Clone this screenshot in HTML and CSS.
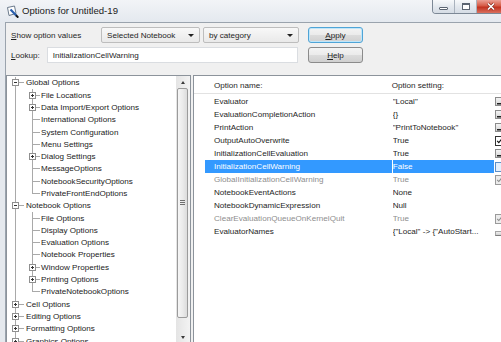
FILE: index.html
```html
<!DOCTYPE html>
<html lang="en">
<head>
<meta charset="utf-8">
<title>Options for Untitled-19</title>
<link rel="stylesheet" href="styles.css">
</head>
<body>
<div class="window">
	<div class="titlebar">
		<svg class="app-icon" viewBox="0 0 13 13">
			<path d="M1.5 2.5 L8.5 1 L10 8.5 L3 10.5Z" fill="#fff" stroke="#6b7a8c"/>
			<path d="M4.5 4.5 L10.5 10.8" stroke="#2a5fae" stroke-width="2.2"/>
			<path d="M10 10.3 L12.3 12.6" stroke="#111" stroke-width="2"/>
		</svg>
		<span class="title">Options for Untitled-19</span>
		<div class="winbtns">
			<span class="wb min"><i></i></span>
			<span class="wb max"><i></i></span>
			<span class="wb close">
				<svg width="10" height="9" viewBox="0 0 10 9">
					<path d="M2 1.5L8 7.5M8 1.5L2 7.5" stroke="#8a2a1e" stroke-width="3"/>
					<path d="M2 1.5L8 7.5M8 1.5L2 7.5" stroke="#fff" stroke-width="1.6"/>
				</svg>
			</span>
		</div>
	</div>

	<div class="client">
		<div class="bar">
			<span class="lbl lbl-show"><u>S</u>how option values</span>
			<div class="combo c1"><span>Selected Notebook</span><b class="arr"></b></div>
			<div class="combo c2"><span>by category</span><b class="arr"></b></div>
			<button class="btn default"><u>A</u>pply</button>
		</div>
		<div class="bar">
			<span class="lbl lbl-look"><u>L</u>ookup:</span>
			<div class="lookup">InitializationCellWarning</div>
			<button class="btn help"><u>H</u>elp</button>
		</div>

		<div class="main">
			<div class="treebox">
				<ul class="tree">
					<li class="l1"><i class="ex minus"></i><span>Global Options</span></li>
					<li class="l2"><i class="ex plus"></i><span>File Locations</span></li>
					<li class="l2"><i class="ex plus"></i><span>Data Import/Export Options</span></li>
					<li class="l2 leaf"><i class="sp"></i><span>International Options</span></li>
					<li class="l2 leaf"><i class="sp"></i><span>System Configuration</span></li>
					<li class="l2 leaf"><i class="sp"></i><span>Menu Settings</span></li>
					<li class="l2"><i class="ex plus"></i><span>Dialog Settings</span></li>
					<li class="l2 leaf"><i class="sp"></i><span>MessageOptions</span></li>
					<li class="l2 leaf"><i class="sp"></i><span>NotebookSecurityOptions</span></li>
					<li class="l2 leaf last"><i class="sp"></i><span>PrivateFrontEndOptions</span></li>
					<li class="l1"><i class="ex minus"></i><span>Notebook Options</span></li>
					<li class="l2 leaf"><i class="sp"></i><span>File Options</span></li>
					<li class="l2 leaf"><i class="sp"></i><span>Display Options</span></li>
					<li class="l2 leaf"><i class="sp"></i><span>Evaluation Options</span></li>
					<li class="l2 leaf"><i class="sp"></i><span>Notebook Properties</span></li>
					<li class="l2"><i class="ex plus"></i><span>Window Properties</span></li>
					<li class="l2"><i class="ex plus"></i><span>Printing Options</span></li>
					<li class="l2 leaf last"><i class="sp"></i><span>PrivateNotebookOptions</span></li>
					<li class="l1"><i class="ex plus"></i><span>Cell Options</span></li>
					<li class="l1"><i class="ex plus"></i><span>Editing Options</span></li>
					<li class="l1"><i class="ex plus"></i><span>Formatting Options</span></li>
					<li class="l1"><i class="ex plus"></i><span>Graphics Options</span></li>
				</ul>
				<div class="vscroll">
					<div class="sb-btn"><b class="up"></b></div>
					<div class="sb-thumb"><i class="grip"></i></div>
					<div class="sb-track"></div>
					<div class="sb-btn"><b class="down"></b></div>
				</div>
			</div>

			<div class="optbox">
				<div class="opthead"><span>Option name:</span><span>Option setting:</span></div>
				<div class="optrows">
					<div class="orow"><span class="n">Evaluator</span><span class="v">"Local"</span><i class="dd"></i></div>
					<div class="orow"><span class="n">EvaluationCompletionAction</span><span class="v">{}</span><i class="dd"></i></div>
					<div class="orow"><span class="n">PrintAction</span><span class="v">"PrintToNotebook"</span><i class="dd"></i></div>
					<div class="orow"><span class="n">OutputAutoOverwrite</span><span class="v">True</span><i class="cb on"><svg viewBox="0 0 9 9"><path d="M1.5 4.3 L3.6 6.5 L7.6 1.6" stroke="#111" stroke-width="1.5" fill="none"/></svg></i></div>
					<div class="orow"><span class="n">InitializationCellEvaluation</span><span class="v">True</span><i class="dd"></i></div>
					<div class="orow sel"><span class="n">InitializationCellWarning</span><span class="v">False</span><i class="cb off"></i></div>
					<div class="orow dis"><span class="n">GlobalInitializationCellWarning</span><span class="v">True</span><i class="cb gray"><svg viewBox="0 0 9 9"><path d="M1.5 4.3 L3.6 6.5 L7.6 1.6" stroke="#8a8a8a" stroke-width="1.3" fill="none"/></svg></i></div>
					<div class="orow"><span class="n">NotebookEventActions</span><span class="v">None</span><i></i></div>
					<div class="orow"><span class="n">NotebookDynamicExpression</span><span class="v">Null</span><i></i></div>
					<div class="orow dis"><span class="n">ClearEvaluationQueueOnKernelQuit</span><span class="v">True</span><i class="cb gray"><svg viewBox="0 0 9 9"><path d="M1.5 4.3 L3.6 6.5 L7.6 1.6" stroke="#8a8a8a" stroke-width="1.3" fill="none"/></svg></i></div>
					<div class="orow"><span class="n">EvaluatorNames</span><span class="v">{"Local" -&gt; {"AutoStart...</span><i class="pb"></i></div>
				</div>
			</div>
		</div>
	</div>
</div>
</body>
</html>
```

FILE: styles.css
```css
* {box-sizing:border-box;}
html, body {margin:0; padding:0;}
body {width:501px; height:342px; overflow:hidden; font-family:"Liberation Sans", Arial, sans-serif; font-size:8.1px; color:#1e1e1e; background:#e5e9ee;}
u {text-decoration:underline;}

.window {height:342px; overflow:hidden;}

/* title bar */
.titlebar {display:flex; align-items:flex-start; height:22px; background:linear-gradient(#f2f4f7, #e4e9ef);}
.app-icon {width:13px; height:13px; margin:5px 0 0 6px; flex:none;}
.title {font-size:9.6px; line-height:22px; margin-left:3px; color:#1b1b1b;}
.winbtns {display:flex; margin-left:auto; margin-right:-4px; height:14px; border:1px solid #7c8896; border-top:none; border-radius:0 0 4px 4px; overflow:hidden;}
.wb {width:22px; display:flex; align-items:center; justify-content:center; background:linear-gradient(#f7f9fb, #e3e8ee 50%, #d5dce5); border-left:1px solid #a9b2bd;}
.wb:first-child {border-left:none; width:21px;}
.wb i {display:block; background:#fff; border:1px solid #5b6572;}
.min i {width:9px; height:3px; border-radius:1px; margin-top:3px;}
.max i {width:8px; height:7px; border-top-width:2px;}
.close {width:28px; background:linear-gradient(#eba095, #d65a45 45%, #c3321f 55%, #d9705f);}

/* client area */
.client {margin-left:5px; height:320px; border-left:1px solid #9aa3ad; border-top:1px solid #9aa3ad; background:#f0f0f0; padding-top:4px;}
.bar {display:flex; align-items:center; height:16px; padding-left:5px;}
.bar + .bar {margin-top:4px;}
.lbl-show {width:90px; flex:none;}
.lbl-look {width:35.7px; flex:none;}
.combo {height:16px; display:flex; align-items:center; padding-left:5px; border:1px solid #bdbdbd; border-radius:2px; background:linear-gradient(#f8f8f8, #e9e9e9); flex:none;}
.c1 {width:99px;}
.c2 {width:96px; margin-left:3px;}
.arr {margin-left:auto; margin-right:5px; width:0; height:0; border-left:3px solid transparent; border-right:3px solid transparent; border-top:3.5px solid #222;}
.lookup {width:251.3px; height:16.3px; line-height:15px; padding-left:5px; background:#fff; border:1px solid #dadde1; flex:none;}
.btn {flex:none; width:55px; height:15.5px; margin-left:9px; padding:0; font:inherit; color:#1e1e1e; border:1px solid #8b8b8b; border-radius:3px; background:linear-gradient(#f4f4f4, #ebebeb 48%, #dcdcdc 52%, #d0d0d0);}
.btn.default {border-color:#4fa4d6; box-shadow:inset 0 0 0 1px #bfe6fa;}
.btn.help {margin-left:10px;}

/* panels */
.main {display:flex; height:270px; margin-top:11.7px;}
.treebox {width:185px; flex:none; display:flex; border:1px solid #8c939b; background:#fff;}
.optbox {width:320px; flex:none; margin-left:2px; border:1px solid #8c939b; background:#fff;}

/* tree */
.tree {list-style:none; margin:0; padding:1px 0 0; flex:1; overflow:hidden;}
.tree li {display:flex; align-items:center; height:12.3px; white-space:nowrap; color:#222;}
.tree li.l1 {padding-left:5px; background:
	linear-gradient(#a9a9a9, #a9a9a9) 8px 0 / 1px 100% no-repeat,
	linear-gradient(#a9a9a9, #a9a9a9) 12px 50% / 5px 1px no-repeat;}
.tree li.l1 span {margin-left:7px;}
.tree li.l2 {padding-left:22px; background:
	linear-gradient(#a9a9a9, #a9a9a9) 8px 0 / 1px 100% no-repeat,
	linear-gradient(#a9a9a9, #a9a9a9) 25px 0 / 1px 100% no-repeat,
	linear-gradient(#a9a9a9, #a9a9a9) 29px 50% / 4px 1px no-repeat;}
.tree li.l2.leaf {background:
	linear-gradient(#a9a9a9, #a9a9a9) 8px 0 / 1px 100% no-repeat,
	linear-gradient(#a9a9a9, #a9a9a9) 25px 0 / 1px 100% no-repeat,
	linear-gradient(#a9a9a9, #a9a9a9) 25px 50% / 8px 1px no-repeat;}
.tree li.l2.leaf.last {background:
	linear-gradient(#a9a9a9, #a9a9a9) 8px 0 / 1px 100% no-repeat,
	linear-gradient(#a9a9a9, #a9a9a9) 25px 0 / 1px 50% no-repeat,
	linear-gradient(#a9a9a9, #a9a9a9) 25px 50% / 8px 1px no-repeat;}
.tree li.l2 span {margin-left:5px;}
.ex, .sp {display:block; width:7px; height:7px; flex:none;}
.ex {border:1px solid #8f8f8f; background-color:#fff;}
.ex.minus {background:linear-gradient(#333, #333) center / 3px 1px no-repeat, #fff;}
.ex.plus {background:linear-gradient(#333, #333) center / 3px 1px no-repeat, linear-gradient(#333, #333) center / 1px 3px no-repeat, #fff;}

/* tree scrollbar */
.vscroll {width:14px; flex:none; display:flex; flex-direction:column; background:linear-gradient(90deg, #e4e4e4, #f3f3f3);}
.sb-btn {height:12px; display:flex; align-items:center; justify-content:center; flex:none;}
.sb-btn b {width:0; height:0; border-left:2.5px solid transparent; border-right:2.5px solid transparent;}
.sb-btn .up {border-bottom:3px solid #3a3a3a; margin-top:2px;}
.sb-btn .down {border-top:3px solid #3a3a3a;}
.sb-thumb {height:230px; margin:0 2px 0 1px; flex:none; display:flex; align-items:center; justify-content:center; border:1px solid #9b9b9b; border-radius:2px; background:linear-gradient(90deg, #f6f6f6, #ebebeb 50%, #dcdcdc);}
.grip {display:block; width:5px; height:5px; border-top:1px solid #6f6f6f; border-bottom:1px solid #6f6f6f; background:linear-gradient(#6f6f6f, #6f6f6f) center / 100% 1px no-repeat;}
.sb-track {flex:1;}

/* option table */
.opthead {display:grid; grid-template-columns:177.7px 120px; height:18.3px; padding:3px 0 0 20px; line-height:14px; border-bottom:1px solid #e2e2e2;}
.optrows {margin-top:1.5px; padding-left:11px;}
.orow {display:grid; grid-template-columns:186.7px 101.3px 9px; column-gap:1px; height:13px; line-height:13px; align-items:center;}
.orow .n {padding-left:9px; white-space:nowrap; overflow:hidden;}
.orow .v {white-space:nowrap; overflow:hidden;}
.orow.sel .n, .orow.sel .v {background:#3399ff; color:#fff;}
.orow.dis {color:#8e8e8e;}
.orow i {display:block;}
.dd {width:8px; height:9px; border:1px solid #8b8b8b; background:linear-gradient(#222, #222) 50% 5px / 4px 1.5px no-repeat, linear-gradient(#f4f4f4, #d4d4d4);}
.cb {width:9px; height:10px; border:1px solid #333; background:#fff;}
.cb svg {display:block; width:7px; height:8px;}
.cb.off {border-color:#5d8fc8; background:#e4f0fc;}
.cb.gray {border-color:#9a9a9a; background:#ececec;}
.pb {width:9px; height:5px; margin-top:4px; border:1px solid #a5a5a5; border-bottom-color:#7d7d7d; background:linear-gradient(#efefef, #d0d0d0);}
```
